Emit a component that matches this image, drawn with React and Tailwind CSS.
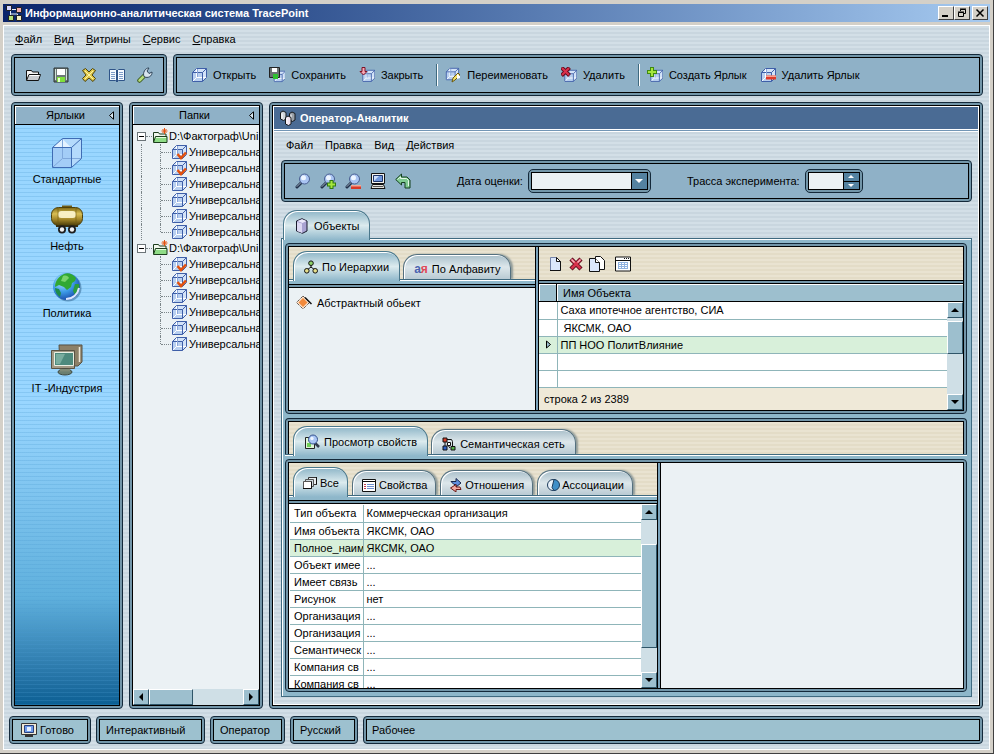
import { useState } from 'react';
import clsx from 'clsx';

/* ---------- icons ---------- */

function Svg({ size = 16, box = 16, children }) {
  return (
    <svg width={size} height={size} viewBox={`0 0 ${box} ${box}`} fill="none" aria-hidden="true" className="shrink-0">
      {children}
    </svg>
  );
}

function CubeShape() {
  return (
    <>
      <path d="M1.5 5.5 5.5 1.5H15.5V10.5L11.5 14.5H1.5Z" fill="#d3e3f8" />
      <path d="M2 6h9v8H2z" fill="#b9d0f0" />
      <path d="M5.5 1.5V10.5H15.5M5.5 10.5 1.5 14.5" stroke="#ffffff" />
      <path d="M1.5 5.5 5.5 1.5H15.5V10.5L11.5 14.5H1.5ZM1.5 5.5H11.5V14.5M11.5 5.5 15.5 1.5" stroke="#3f5fa8" />
      <path d="M6.5 2v8" stroke="#8aa6d8" />
    </>
  );
}

const CubeIcon = () => <Svg><CubeShape /></Svg>;

const CubeCheckIcon = () => (
  <Svg>
    <CubeShape />
    <path d="M6.5 10 10 14 15 8.5" stroke="#e2510f" strokeWidth="2.6" />
  </Svg>
);

const CubeSaveIcon = () => (
  <Svg>
    <g transform="translate(4 3) scale(.8)"><CubeShape /></g>
    <path d="M.5.5h10v10H.5z" fill="#6b7474" stroke="#222" />
    <path d="M3 1h5v4H3z" fill="#fff" />
    <path d="M4 7h5v5H4z" fill="#2fc12f" />
  </Svg>
);

const CubeCloseIcon = () => (
  <Svg>
    <g transform="translate(2.5 2) scale(.86)"><CubeShape /></g>
    <path d="M3 .5h3v4h2L4.5 8 1 4.5h2z" fill="#f7a7b5" stroke="#7d1024" />
  </Svg>
);

const CubeRenameIcon = () => (
  <Svg>
    <g transform="scale(.88)"><CubeShape /></g>
    <path d="M7 15 8 11l5-5 2 2-5 5z" fill="#f3e16a" stroke="#6b5a10" />
    <path d="M12 7l3 2v2l-3 1z" fill="#fff" />
  </Svg>
);

const CubeDeleteIcon = () => (
  <Svg>
    <g transform="translate(2.5 2) scale(.86)"><CubeShape /></g>
    <path d="M.5.5l8 8M8.500.5l-8 8" stroke="#5c0a1c" strokeWidth="4" />
    <path d="M1 1l7 7M8 1 1 8" stroke="#d8304c" strokeWidth="2.2" />
  </Svg>
);

const CubeAddIcon = () => (
  <Svg>
    <g transform="translate(2.5 2) scale(.86)"><CubeShape /></g>
    <path d="M5 0v10M0 5h10" stroke="#3f8a12" strokeWidth="4" />
    <path d="M5 1v8M1 5h8" stroke="#a5e63c" strokeWidth="2" />
  </Svg>
);

const CubeRemoveIcon = () => (
  <Svg>
    <CubeShape />
    <path d="M6 8.5h10v4H6z" fill="#e03a2a" />
    <path d="M6 8.5h10V10H6z" fill="#f7a08f" />
  </Svg>
);

const BigCubeIcon = () => (
  <Svg size={32} box={32}>
    <path d="M1.5 10.5 11.5 1.5H30.5V21.5L20.5 30.5H1.5Z" fill="#b4dafc" />
    <path d="M2 11h18v19H2z" fill="#a3cdf7" />
    <path d="M11.5 2 20 10.500H2z" fill="#e3f2ff" />
    <path d="M11.5 2V21.500H30M11.5 21.5 2 30" stroke="#7fa8dc" />
    <path d="M1.5 10.5 11.5 1.5H30.5V21.5L20.5 30.5H1.5ZM1.5 10.5H20.5V30.5M20.5 10.5 30.5 1.5" stroke="#3f6cb4" />
  </Svg>
);

const OpenFolderIcon = () => (
  <Svg>
    <path d="M1.5 13V3.5h5L7.5 5h6v3" fill="#f4f4f4" stroke="#111" />
    <path d="M1.5 13.5 4 7.5h11.5l-2 6z" fill="#c9ccd0" stroke="#111" />
    <path d="M4.5 8.5h10" stroke="#fff" />
  </Svg>
);

const DiskIcon = () => (
  <Svg>
    <path d="M1 1h14v14H1z" fill="#6e7878" stroke="#2c3434" />
    <path d="M4 2h8v6H4z" fill="#fff" />
    <path d="M2.5 2v11M13.5 2v11" stroke="#cfe3d8" />
    <path d="M4 10h8v5H4z" fill="#7fe03a" />
    <path d="M5 11h2v4H5z" fill="#e6ffd0" />
  </Svg>
);

const CloseIcon = () => (
  <Svg>
    <path d="M1.5 3.5 4.500 1.5l3.500 3.5 3.5-3.5 3 2L11 8l3.5 3.5L12 14.5 8 11l-4 3.5-2.5-3L5 8z" fill="#e0c94c" stroke="#4d430c" />
    <path d="M4 4l8 8M12 4l-8 8" stroke="#fbf3a4" />
  </Svg>
);

const BookIcon = () => (
  <Svg>
    <path d="M.5 2.500h6L8 4l1.500-1.500h6v11h-6L8 15l-1.500-1.500h-6z" fill="#f5f9ff" stroke="#2f5488" />
    <path d="M8 4v10" stroke="#2f5488" strokeWidth="2" />
    <path d="M2 5.5h4M2 7.5h4M2 9.5h4M2 11.5h4M10 5.5h4M10 7.5h4M10 9.5h4M10 11.5h4" stroke="#7d9dc8" />
  </Svg>
);

const WrenchIcon = () => (
  <Svg>
    <path d="M2.500 13.500 8 8" stroke="#3d5a1e" strokeWidth="4.5" strokeLinecap="round" />
    <path d="M2.500 13.500 7 9" stroke="#b5dc7c" strokeWidth="2.5" strokeLinecap="round" />
    <path d="M7 9.500C5.500 6 8 .8 12 1L10 4l2 2.500 3-1.500c.5 4-4 7-8 4.500z" fill="#d8e4ee" stroke="#2e4358" />
  </Svg>
);

function Magnifier() {
  return (
    <>
      <path d="M2 14 6 10" stroke="#20304a" strokeWidth="3" strokeLinecap="round" />
      <path d="M2 13.5 6 9.5" stroke="#9fb0c4" strokeLinecap="round" />
      <circle cx="9.500" cy="6" r="5" fill="#a9c4f2" stroke="#4a5f92" />
      <circle cx="8.500" cy="4.800" r="2.500" fill="#eef5ff" />
    </>
  );
}

const SearchIcon = () => <Svg><Magnifier /></Svg>;

const SearchAddIcon = () => (
  <Svg>
    <Magnifier />
    <path d="M11.5 7v9M7 11.5h9" stroke="#2f7a10" strokeWidth="4" />
    <path d="M11.5 8v7M8 11.5h7" stroke="#a5e63c" strokeWidth="2" />
  </Svg>
);

const SearchRemoveIcon = () => (
  <Svg>
    <Magnifier />
    <path d="M6 12h10v4H6z" fill="#d83a28" />
    <path d="M6 12h10v1.500H6z" fill="#f5a796" />
  </Svg>
);

const ComputerIcon = () => (
  <Svg>
    <path d="M1.5.5h13v10h-13z" fill="#f3f3ee" stroke="#111" />
    <path d="M3.5 2.5h9v6h-9z" fill="#6f97dc" stroke="#1d3468" />
    <path d="M4 3h5L4 8z" fill="#cfe0fb" />
    <path d="M2.5 11.5h11l1.500 4H1z" fill="#e6e6e0" stroke="#111" />
    <path d="M3 13.500h10" stroke="#555" />
  </Svg>
);

const BackIcon = () => (
  <Svg>
    <path d="M.7 6.5 6.500 1v3H12l3 3v8h-5V9.500H6.500V12z" fill="#7fcb92" stroke="#14401f" />
    <path d="M2.500 6.500 5.500 3.800V5.500h6l2 2V13" stroke="#e4f9e6" />
  </Svg>
);

const TankerIcon = () => (
  <Svg size={32} box={32}>
    <defs>
      <linearGradient id="tank" x1="0" y1="0" x2="0" y2="1">
        <stop offset="0" stopColor="#7d6712" />
        <stop offset=".35" stopColor="#d9bf55" />
        <stop offset=".65" stopColor="#a5882a" />
        <stop offset="1" stopColor="#4a3c08" />
      </linearGradient>
    </defs>
    <path d="M11 1.500h10v3H11z" fill="#6e5b13" />
    <rect x=".5" y="3.500" width="31" height="18" rx="7" fill="url(#tank)" stroke="#4e400a" />
    <rect x="7" y="7" width="18" height="7" rx="3.500" fill="#fdf6d0" opacity=".9" />
    <path d="M7 4v17M25 4v17" stroke="#6e5b13" opacity=".6" />
    <path d="M5 21h22v2H5z" fill="#3a3010" />
    {[11, 21].map((x) => (
      <g key={x}>
        <circle cx={x} cy="25.500" r="4" fill="#1d1d1d" />
        <circle cx={x} cy="25.500" r="2.200" fill="#f1f1f1" />
      </g>
    ))}
  </Svg>
);

const GlobeIcon = () => (
  <Svg size={32} box={32}>
    <defs>
      <radialGradient id="globe" cx=".35" cy=".3" r=".8">
        <stop offset="0" stopColor="#b9ecff" />
        <stop offset=".5" stopColor="#3d9be8" />
        <stop offset="1" stopColor="#123a9c" />
      </radialGradient>
    </defs>
    <circle cx="17" cy="17" r="13.500" fill="#2d5f8c" opacity=".5" />
    <circle cx="15.500" cy="15.500" r="13.500" fill="url(#globe)" />
    <path d="M13 3c4-2 9 0 12 4l-1 3-3 2-1 4-4 3-3-3-5-2-4 2c0-6 4-11 9-13z" fill="#31a832" />
    <path d="M12 5c3-1 5 0 6 2l-4 4-4-1z" fill="#79d46a" />
    <path d="M24 13l4 0c1 4-1 9-4 11l-2-4z" fill="#2c9c3f" />
    <path d="M4 17l4 1 2 4-1 4c-3-2-5-5-5-9z" fill="#1d8c4a" />
    <path d="M15 28c7 0 12-5 13-11" stroke="#dbe6ff" strokeWidth="2" />
  </Svg>
);

const MonitorsIcon = () => (
  <Svg size={32} box={32}>
    <path d="M8 1h23v17l-4 4H9z" fill="#8c8068" stroke="#5a5344" />
    <path d="M28.5 3v15" stroke="#efe8d8" strokeWidth="1.5" />
    <path d="M.5 6.500h23v18H.5z" fill="#a39a86" stroke="#5a5344" />
    <path d="M3.5 8.500h19v13h-19z" fill="#4e8a7d" stroke="#e9efe4" />
    <path d="M5 10h9l-5 10H5z" fill="#79ad9f" />
    <ellipse cx="14" cy="28" rx="7" ry="3" fill="#6b7f70" stroke="#3f4a42" />
    <path d="M9 25h10v2.500H9z" fill="#7f8b78" />
  </Svg>
);

const TreeFolderIcon = () => (
  <Svg>
    <path d="M1.5 14V4.5h5L7.500 6H14v3" fill="#f0f6ec" stroke="#1c3d1c" />
    <path d="M1.5 14.500 3.500 8.500H15v6z" fill="#8fdc86" stroke="#1c3d1c" />
    <path d="M4 9.500h10" stroke="#e2fbdc" />
    <path d="M12.5 0v6M9.500 3h6M10.500 1l4 4M14.500 1l-4 4" stroke="#e2510f" />
  </Svg>
);

const NetIcon = () => (
  <Svg>
    <path d="M4.5 4v5h7v4M4.5 9v4M5 4.5h6" stroke="#e9eef7" />
    <path d="M.5.5h5v5h-5z" fill="#d9d9ff" stroke="#222" />
    <path d="M10.5 2.500h5v5h-5z" fill="#f0b0b0" stroke="#222" />
    <path d="M2.500 10.500h5v5h-5z" fill="#b5e07a" stroke="#222" />
    <path d="M10.500 10.500h5v5h-5z" fill="#f3edc3" stroke="#222" />
  </Svg>
);

const AnalystIcon = () => (
  <Svg>
    {[[0, 1, '#cfd3d8'], [9, 2, '#9aa0a8'], [5, 6, '#f0e3ee']].map(([x, y, fill]) => (
      <g key={x}>
        <path d={`M${x + 0.5} ${y + 1.5}l2.5-1.5 3 1.5v6.5l-2.5 1.5-3-1.5z`} fill={fill} stroke="#15181c" />
        <path d={`M${x + 2} ${y + 2.5}v5`} stroke="#fff" />
      </g>
    ))}
  </Svg>
);

const PrismIcon = () => (
  <Svg>
    <path d="M2.500 3 8 .7l5 2.300v10l-4.500 2.300L2.500 13z" fill="#a9a3d2" stroke="#191a2c" />
    <path d="M3.500 3l5 2L12.500 3 8 1.300z" fill="#eceafb" />
    <path d="M3 4l5 1.500V15l-5-2z" fill="#dcd8f2" />
  </Svg>
);

const HierarchyIcon = () => (
  <Svg size={14} box={14}>
    <path d="M7 5v3M7 7 3 10M7 7l4 3" stroke="#111" />
    <circle cx="7" cy="3.200" r="2.300" fill="#8fd36a" stroke="#111" />
    <circle cx="2.800" cy="10.800" r="2.300" fill="#e6df8a" stroke="#111" />
    <circle cx="11.200" cy="10.800" r="2.300" fill="#e6df8a" stroke="#111" />
  </Svg>
);

const DiamondIcon = () => (
  <Svg>
    <path d="M7 1 13.500 7.500 7 14 .5 7.500z" fill="#fbe3cc" stroke="#2a1a10" strokeDasharray="1 1" />
    <path d="M7 3 11.500 7.500 7 12 2.500 7.500z" fill="#f28a3c" />
    <path d="M9 2.500 15.500 9" stroke="#111" strokeWidth="1.500" />
  </Svg>
);

const PageIcon = () => (
  <Svg>
    <path d="M3.500 1.500h6l4 4v9h-10z" fill="#dbe7fb" stroke="#7483a8" />
    <path d="M9.500 1.500v4h4" fill="#fff" stroke="#111" />
    <path d="M3 14.500h10.500v-9l-4-4" stroke="#111" />
  </Svg>
);

const RedCrossIcon = () => (
  <Svg>
    <path d="M3 3l10 10M13 3 3 13" stroke="#5c0a1c" strokeWidth="4.500" />
    <path d="M3.500 3.500l9 9M12.500 3.500l-9 9" stroke="#d8304c" strokeWidth="2.500" />
    <path d="M3.500 3.500l3 3M12.500 3.500l-3 3" stroke="#f5b3bd" strokeWidth="1.500" />
  </Svg>
);

const PagesIcon = () => (
  <Svg>
    <path d="M6.500.5h5l4 4v9h-9z" fill="#fff" stroke="#111" />
    <path d="M.5 2.500h6l4 4v9H.5z" fill="#dbe7fb" stroke="#111" />
    <path d="M6.500 2.500v4h4" fill="#fff" stroke="#111" />
  </Svg>
);

const CalendarIcon = () => (
  <Svg>
    <path d="M.5 1h15v14H.5z" fill="#fff" stroke="#111" />
    <path d="M1 4.500h14" stroke="#111" />
    <path d="M9 2.500h1M11 2.500h1M13 2.500h1" stroke="#111" />
    <path d="M3 6.500h10M3 8.500h10M3 10.500h10M3 12.500h10M3.500 6v7M6.500 6v7M9.500 6v7M12.500 6v7" stroke="#8fb2e0" />
  </Svg>
);

const PreviewIcon = () => (
  <Svg>
    <path d="M1.500 3.500h9v11h-9z" fill="#dff5d8" stroke="#222" />
    <path d="M3 9h4v4H3z" fill="#6fcf57" />
    <path d="M11 9l4 4" stroke="#333d4f" strokeWidth="2.500" />
    <circle cx="9" cy="5.500" r="4.500" fill="#a9c6f5" stroke="#33508c" />
    <circle cx="8" cy="4.500" r="1.700" fill="#eef5ff" />
  </Svg>
);

const SemanticIcon = () => (
  <Svg size={14} box={14}>
    <path d="M3 5v5M5 2.500h4.500l1 2V10M5 7l3 4" stroke="#111" />
    <path d="M1 1h4v4H1z" fill="#d8402c" stroke="#111" />
    <path d="M1 9h4v4H1z" fill="#2f62c8" stroke="#111" />
    <path d="M5.500 5.500h3v3h-3z" fill="#fff" stroke="#111" />
    <path d="M9 9.500h4V13H9z" fill="#58b04c" stroke="#111" />
  </Svg>
);

const StackIcon = () => (
  <Svg>
    <path d="M6.500 2.500h8v7h-8z" fill="#e9eef0" stroke="#333" />
    <path d="M3.500 4.500h8v7h-8z" fill="#cdd7dc" stroke="#555" />
    <path d="M1.500 6.500h8v7h-8z" fill="#fff" stroke="#555" />
    <path d="M1 13.500h8.500V6.500M14.500 2v7.500" stroke="#111" />
  </Svg>
);

const PropsIcon = () => (
  <Svg>
    <path d="M1.500 2.500h13v12h-13z" fill="#fff" stroke="#111" />
    <path d="M2 4.500h12" stroke="#111" />
    <path d="M3 7.500h2M3 9.500h2M3 11.500h2" stroke="#c23b4b" />
    <path d="M6 7.500h7M6 9.500h7M6 11.500h7" stroke="#6d8fd0" />
  </Svg>
);

const RelationsIcon = () => (
  <Svg size={14} box={14}>
    <path d="M2 3.500h5V.5L12 5 7 9V6.500H5z" fill="#5f8fe0" stroke="#15254a" />
    <path d="M12 11.500H7V14L1.500 10 7 6.500V9h4z" fill="#f3aaa2" stroke="#6b1a18" />
  </Svg>
);

const AssocIcon = () => (
  <Svg size={14} box={14}>
    <circle cx="7" cy="7" r="5.500" fill="#e9f2fa" stroke="#1d3c5c" />
    <path d="M8 1.500a5.500 5.500 0 0 1 0 11l-2-3z" fill="#3f8fc8" stroke="#1d3c5c" />
  </Svg>
);

const ReadyIcon = () => (
  <Svg>
    <path d="M.5 1.500h15v11H.5z" fill="#f0ead8" stroke="#333" />
    <path d="M3.500 3.500h9v7h-9z" fill="#6f9bea" stroke="#29407a" />
    <path d="M6 5h4v4H6z" fill="#e6f0ff" />
    <path d="M4 14h8" stroke="#333" strokeWidth="2" />
  </Svg>
);

/* ---------- building blocks ---------- */

const STRIPES = 'bg-[repeating-linear-gradient(to_bottom,#d3dfe7_0px,#d3dfe7_2px,#c9d6df_2px,#c9d6df_4px)]';
const SAND = 'bg-[repeating-linear-gradient(to_bottom,#e9e3d1_0px,#e9e3d1_2px,#e3dcc7_2px,#e3dcc7_4px)]';

function Frame({ className, innerClassName, children }) {
  return (
    <div className={clsx('flex rounded-[4px] border border-[#14293a] bg-[#7396a9] p-[2px]', className)}>
      <div className={clsx('min-w-0 flex-1 border border-black', innerClassName)}>{children}</div>
    </div>
  );
}

function Arrow({ dir, className = 'fill-black' }) {
  const shapes = { up: 'M0 6 4 2 8 6z', down: 'M0 2 4 6 8 2z', left: 'M6 0 2 4 6 8z', right: 'M2 0 6 4 2 8z' };
  return (
    <svg width="8" height="8" viewBox="0 0 8 8" aria-hidden="true" className={className}>
      <path d={shapes[dir]} />
    </svg>
  );
}

function ScrollButton({ dir, label }) {
  return (
    <button
      type="button"
      aria-label={label}
      className="flex h-4 w-4 shrink-0 items-center justify-center border border-t-white border-r-[#2f5568] border-b-[#2f5568] border-l-white bg-[#9dbfce]"
    >
      <Arrow dir={dir} />
    </button>
  );
}

function Thumb({ className }) {
  return <div className={clsx('shrink-0 border border-t-white border-r-[#2f5568] border-b-[#2f5568] border-l-white bg-[#9dbfce]', className)} />;
}

function Tab({ icon, label, active, compact, onClick }) {
  return (
    <button
      type="button"
      role="tab"
      aria-selected={active}
      onClick={onClick}
      className={clsx(
        'flex items-center rounded-t-[14px] border border-b-0 whitespace-nowrap',
        compact ? 'gap-[2px] px-2' : 'gap-1 px-2.5',
        active
          ? 'relative z-10 -mb-[2px] h-[30px] border-[#4a788c] bg-linear-to-b from-[#8fb6c8] via-[#dcebee] to-[#8eb7ca] shadow-[inset_1px_1px_0_#ffffff]'
          : 'h-[25px] border-[#54707f] bg-linear-to-b from-[#a9bfca] via-[#dde7eb] to-[#b9cad3] pt-[3px] shadow-[inset_1px_1px_0_#ffffff,2px_0_2px_#8f9a98]'
      )}
    >
      {icon}
      {label}
    </button>
  );
}

function TabStrip({ tabs, label, compact }) {
  const [current, setCurrent] = useState(0);
  return (
    <div role="tablist" aria-label={label} className={clsx('flex h-8 items-end pl-1', compact ? 'gap-1' : 'gap-[3px]')}>
      {tabs.map((tab, i) => (
        <Tab key={tab.label} {...tab} compact={compact} active={i === current} onClick={() => setCurrent(i)} />
      ))}
    </div>
  );
}

const PageEdge = () => <div className="h-[5px] shrink-0 border-t border-[#3f6a80] bg-[#8eb7ca] shadow-[inset_0_1px_0_#ffffff]" />;
const DoubleRule = () => <div className="h-1 shrink-0 border-y border-black bg-[#7396a9]" />;
const Splitter = () => <div className="w-1 shrink-0 border-x border-black bg-[#7ba3bb]" />;

function IconButton({ label, children }) {
  return (
    <button type="button" aria-label={label} className="flex h-5 w-5 items-center justify-center">
      {children}
    </button>
  );
}

function MenuBar({ items, underline, className }) {
  return (
    <nav className={clsx('flex h-7 shrink-0 items-center gap-3 pb-[2px]', className)}>
      {items.map((item) => (
        <button key={item} type="button">
          {underline ? (
            <>
              <span className="underline underline-offset-1">{item[0]}</span>
              {item.slice(1)}
            </>
          ) : (
            item
          )}
        </button>
      ))}
    </nav>
  );
}

function PanelHeader({ title }) {
  return (
    <div className="flex h-[19px] shrink-0 items-center border-b border-black bg-[#8fb1c7] pr-1 shadow-[inset_1px_1px_0_#ffffff]">
      <h2 className="flex-1 pl-2 text-center">{title}</h2>
      <button type="button" aria-label="Свернуть">
        <svg width="7" height="9" viewBox="0 0 7 9" fill="none" aria-hidden="true">
          <path d="M5.500.8v7.400L1.500 4.500z" fill="#d7e8f2" stroke="#000" />
        </svg>
      </button>
    </div>
  );
}

/* ---------- window parts ---------- */

function TitleBar() {
  const btn = 'flex h-[14px] w-4 items-center justify-center border border-t-white border-r-[#404040] border-b-[#404040] border-l-white bg-[#d4d0c8]';
  return (
    <header className="flex h-[18px] shrink-0 items-center bg-linear-to-r from-[#0a246a] to-[#a6caf0] pr-[2px] pl-[3px] text-white">
      <NetIcon />
      <h1 className="flex-1 pl-[3px] font-bold">Информационно-аналитическая система TracePoint</h1>
      <button type="button" aria-label="Свернуть" className={btn}>
        <svg width="10" height="10" viewBox="0 0 10 10"><path d="M1 7h6v2H1z" /></svg>
      </button>
      <button type="button" aria-label="Восстановить" className={btn}>
        <svg width="10" height="10" viewBox="0 0 10 10" fill="none" stroke="#000">
          <path d="M3.5 3V1.5h5v4H7M3 1h6" />
          <path d="M1.5 4.5h5v4h-5zM1 4h6" />
        </svg>
      </button>
      <button type="button" aria-label="Закрыть" className={clsx(btn, 'ml-[2px]')}>
        <svg width="10" height="10" viewBox="0 0 10 10" stroke="#000" strokeWidth="1.500"><path d="M1.5 1.5l7 7M8.5 1.5l-7 7" /></svg>
      </button>
    </header>
  );
}

const ACTIONS = [
  { icon: <CubeIcon />, label: 'Открыть' },
  { icon: <CubeSaveIcon />, label: 'Сохранить' },
  { icon: <CubeCloseIcon />, label: 'Закрыть' },
  null,
  { icon: <CubeRenameIcon />, label: 'Переименовать' },
  { icon: <CubeDeleteIcon />, label: 'Удалить' },
  null,
  { icon: <CubeAddIcon />, label: 'Создать Ярлык' },
  { icon: <CubeRemoveIcon />, label: 'Удалить Ярлык' },
];

function Toolbars() {
  return (
    <div className="flex gap-1.5">
      <Frame className="h-[42px] w-[156px]" innerClassName="flex items-center justify-between bg-[#8fb1c7] px-2">
        <IconButton label="Открыть файл"><OpenFolderIcon /></IconButton>
        <IconButton label="Сохранить файл"><DiskIcon /></IconButton>
        <IconButton label="Закрыть файл"><CloseIcon /></IconButton>
        <IconButton label="Справочник"><BookIcon /></IconButton>
        <IconButton label="Настройки"><WrenchIcon /></IconButton>
      </Frame>
      <Frame className="h-[42px] min-w-0 flex-1" innerClassName="flex items-center gap-[13px] bg-[#8fb1c7] pl-[14px]">
        {ACTIONS.map((action, i) =>
          action ? (
            <button key={action.label} type="button" className="flex items-center gap-1.5 whitespace-nowrap">
              {action.icon}
              {action.label}
            </button>
          ) : (
            <div key={i} className="-mr-1.5 h-[22px] w-[2px] border-l border-[#3f6a80] bg-white" />
          )
        )}
      </Frame>
    </div>
  );
}

function Shortcuts() {
  const items = [
    { icon: <BigCubeIcon />, label: 'Стандартные' },
    { icon: <TankerIcon />, label: 'Нефть' },
    { icon: <GlobeIcon />, label: 'Политика' },
    { icon: <MonitorsIcon />, label: 'IT -Индустрия' },
  ];
  return (
    <Frame className="w-[112px] shrink-0" innerClassName="flex flex-col bg-linear-to-b from-[#99d6ff] from-50% via-[#5fb0dd] via-82% to-[#0a5f93]">
      <PanelHeader title="Ярлыки" />
      <div className="flex flex-1 flex-col items-center gap-[17px] bg-[repeating-linear-gradient(to_bottom,transparent_0px,transparent_3px,#4a9ad040_3px,#4a9ad040_4px)] pt-3">
        {items.map(({ icon, label }) => (
          <button key={label} type="button" className="flex flex-col items-center gap-[2px] last:mt-1.5 last:gap-1">
            {icon}
            <span className="leading-4">{label}</span>
          </button>
        ))}
      </div>
    </Frame>
  );
}

function TreeGroup({ first }) {
  return (
    <li>
      <div className="flex h-4 items-center">
        <button
          type="button"
          aria-label="Свернуть ветку"
          className="ml-1 flex h-[9px] w-[9px] shrink-0 items-center justify-center border border-[#6b7478] bg-white"
        >
          <span className="h-px w-[5px] bg-black" />
        </button>
        <span className="w-1.5 shrink-0 border-b border-dotted border-[#7b8589]" />
        <TreeFolderIcon />
        <span className="pl-px">D:\Фактограф\Uni</span>
      </div>
      <ul>
        {[true, true, false, false, false, false].map((checked, i) => (
          <li key={i} className="flex h-4 items-center">
            <span className={clsx('h-4 w-[9px] shrink-0 border-r border-dotted', first ? 'border-[#7b8589]' : 'border-transparent')} />
            <span className={clsx('w-[19px] shrink-0 self-start border-r border-dotted border-[#7b8589]', i === 5 ? 'h-2' : 'h-4')} />
            <span className="w-[10px] shrink-0 border-b border-dotted border-[#7b8589]" />
            {checked ? <CubeCheckIcon /> : <CubeIcon />}
            <span className="pl-[2px]">Универсальна</span>
          </li>
        ))}
      </ul>
    </li>
  );
}

function Folders() {
  return (
    <Frame className="w-[134px] shrink-0" innerClassName="flex flex-col bg-[#ebf1f4]">
      <PanelHeader title="Папки" />
      <ul className="flex-1 overflow-hidden pt-[3px] whitespace-nowrap">
        <TreeGroup first />
        <TreeGroup />
      </ul>
      <div className="flex bg-[#cfdfe6]">
        <ScrollButton dir="left" label="Прокрутить влево" />
        <Thumb className="h-4 w-11" />
        <div className="flex-1" />
        <ScrollButton dir="right" label="Прокрутить вправо" />
      </div>
    </Frame>
  );
}

function SearchBar() {
  const field = 'flex rounded-[5px] border border-[#14293a] bg-[#7396a9] p-[2px]';
  return (
    <Frame className="h-[42px] shrink-0" innerClassName="flex items-center bg-[#8fb1c7] pl-2">
      <div className="flex gap-[5px]">
        <IconButton label="Найти"><SearchIcon /></IconButton>
        <IconButton label="Добавить к поиску"><SearchAddIcon /></IconButton>
        <IconButton label="Убрать из поиска"><SearchRemoveIcon /></IconButton>
        <IconButton label="Компьютер"><ComputerIcon /></IconButton>
        <IconButton label="Назад"><BackIcon /></IconButton>
      </div>
      <label htmlFor="date" className="pr-[5px] pl-11">Дата оценки:</label>
      <div className={field}>
        <div className="relative">
          <select id="date" className="block h-[18px] w-[117px] appearance-none border border-black bg-[#ebf1f4]" />
          <span className="pointer-events-none absolute inset-y-px right-px flex w-4 items-center justify-center border-l border-black bg-[#5482a0]">
            <Arrow dir="down" className="fill-white" />
          </span>
        </div>
      </div>
      <label htmlFor="track" className="pr-[5px] pl-9">Трасса эксперимента:</label>
      <div className={field}>
        <div className="flex h-[18px] border border-black">
          <input id="track" type="text" className="w-[34px] bg-[#ebf1f4]" />
          <div className="flex w-4 flex-col gap-px border-l border-black bg-black">
            <button type="button" aria-label="Больше" className="flex flex-1 items-center justify-center bg-[#5482a0]">
              <svg width="6" height="3" viewBox="0 0 6 3"><path d="M0 3 3 0l3 3z" fill="#fff" /></svg>
            </button>
            <button type="button" aria-label="Меньше" className="flex flex-1 items-center justify-center bg-[#5482a0]">
              <svg width="6" height="3" viewBox="0 0 6 3"><path d="M0 0l3 3 3-3z" fill="#fff" /></svg>
            </button>
          </div>
        </div>
      </div>
    </Frame>
  );
}

function ObjectList() {
  const rows = ['Саха ипотечное агентство, СИА', '\u00a0ЯКСМК, ОАО', 'ПП НОО ПолитВлияние', '', ''];
  return (
    <div className="flex min-w-0 flex-1 flex-col">
      <div className={clsx('flex h-[33px] shrink-0 items-center gap-px pl-1.5', SAND)}>
        <IconButton label="Создать"><PageIcon /></IconButton>
        <IconButton label="Удалить"><RedCrossIcon /></IconButton>
        <IconButton label="Копировать"><PagesIcon /></IconButton>
        <span className="w-1" />
        <IconButton label="Таблица"><CalendarIcon /></IconButton>
      </div>
      <DoubleRule />
      <div className="flex min-h-0 flex-1 flex-col">
        <div className="flex h-[18px] shrink-0 border-b border-black bg-[#9dbfce]">
          <div className="w-[18px] border-r border-black shadow-[inset_1px_1px_0_#ffffff]" />
          <div id="object-name" className="flex flex-1 items-center pl-1.5 shadow-[inset_1px_1px_0_#ffffff]">Имя Объекта</div>
        </div>
        <div className="flex min-h-0 flex-1">
          <div className="flex min-w-0 flex-1 flex-col bg-[#efe9d8]">
            <table aria-labelledby="object-name" className="w-full table-fixed bg-white">
              <tbody>
                {rows.map((name, i) => (
                  <tr key={i} className={clsx('h-[17px] border-b border-[#8fb5b9] leading-4', i === 2 && 'bg-[#d8f0da]')}>
                    <td className="w-[18px] border-r border-[#8fb5b9] p-0 pl-1.5">
                      {i === 2 && (
                        <svg width="7" height="9" viewBox="0 0 7 9" aria-hidden="true">
                          <path d="M1.5 1v7l4-3.500z" fill="#9dbfce" stroke="#000" />
                        </svg>
                      )}
                    </td>
                    <td className="truncate p-0 pl-[3px]">{name}</td>
                  </tr>
                ))}
              </tbody>
            </table>
            <div className="flex flex-1 items-center pl-[5px]">строка 2 из 2389</div>
          </div>
          <div className="flex w-4 flex-col bg-[#cfdfe6]">
            <ScrollButton dir="up" label="Прокрутить вверх" />
            <Thumb className="mt-[3px] h-[33px] w-4" />
            <div className="flex-1" />
            <ScrollButton dir="down" label="Прокрутить вниз" />
          </div>
        </div>
      </div>
    </div>
  );
}

const PROPERTIES = [
  ['Тип объекта', 'Коммерческая организация'],
  ['Имя объекта', 'ЯКСМК, ОАО'],
  ['Полное_наим', 'ЯКСМК, ОАО'],
  ['Объект имее', '...'],
  ['Имеет связь', '...'],
  ['Рисунок', 'нет'],
  ['Организация', '...'],
  ['Организация', '...'],
  ['Семантическ', '...'],
  ['Компания св', '...'],
  ['Компания св', '...'],
];

function PropertyTable() {
  return (
    <div className="flex min-h-0 flex-1 bg-white">
      <div className="min-w-0 flex-1 overflow-hidden pt-px pl-px">
        <table className="w-full table-fixed">
          <tbody>
            {PROPERTIES.map(([name, value], i) => (
              <tr key={i} className={clsx('h-[17px] border-b border-[#8fb5b9] leading-4', i === 2 && 'bg-[#d8f0da]')}>
                <th scope="row" className="w-[73px] overflow-hidden border-r border-[#8fb5b9] p-0 pl-1 text-left font-normal whitespace-nowrap">
                  {name}
                </th>
                <td className="truncate p-0 pl-[3px]">{value}</td>
              </tr>
            ))}
          </tbody>
        </table>
      </div>
      <div className="flex w-4 flex-col bg-[#cfdfe6]">
        <ScrollButton dir="up" label="Прокрутить вверх" />
        <div className="flex-1" />
        <Thumb className="h-[57%] w-4" />
        <div className="flex-1" />
        <ScrollButton dir="down" label="Прокрутить вниз" />
      </div>
    </div>
  );
}

function ObjectsPage() {
  return (
    <div className="flex min-h-0 flex-1 flex-col border border-[#3f6a80] bg-[#8eb7ca] p-1 pl-[3px] shadow-[inset_1px_1px_0_#ffffff]">
      <Frame className="h-[171px] shrink-0" innerClassName="flex">
        <div className="flex w-[246px] flex-col">
          <div className={SAND}>
            <TabStrip
              label="Порядок объектов"
              tabs={[
                { icon: <HierarchyIcon />, label: 'По Иерархии' },
                {
                  icon: (
                    <span aria-hidden="true" className="text-xs font-bold">
                      <span className="text-[#4a62b0]">а</span>
                      <span className="text-[#e04858]">я</span>
                    </span>
                  ),
                  label: 'По Алфавиту',
                },
              ]}
            />
          </div>
          <PageEdge />
          <DoubleRule />
          <div className="flex-1 bg-[#ebf1f4] pt-[7px] pl-[7px]">
            <div className="flex items-center gap-[5px]">
              <DiamondIcon />
              Абстрактный обьект
            </div>
          </div>
        </div>
        <Splitter />
        <ObjectList />
      </Frame>

      <div className="mt-1 flex shrink-0 rounded-t-[4px] border border-b-0 border-[#14293a] bg-[#7396a9] p-[2px] pb-0">
        <div className={clsx('flex-1 border border-b-0 border-black', SAND)}>
          <TabStrip
            label="Просмотр"
            tabs={[
              { icon: <PreviewIcon />, label: 'Просмотр свойств' },
              { icon: <SemanticIcon />, label: 'Семантическая сеть' },
            ]}
          />
        </div>
      </div>
      <PageEdge />

      <Frame className="min-h-0 flex-1" innerClassName="flex">
        <div className="flex min-h-0 w-[368px] flex-col">
          <div className={SAND}>
            <TabStrip
              compact
              label="Свойства объекта"
              tabs={[
                { icon: <StackIcon />, label: 'Все' },
                { icon: <PropsIcon />, label: 'Свойства' },
                { icon: <RelationsIcon />, label: 'Отношения' },
                { icon: <AssocIcon />, label: 'Ассоциации' },
              ]}
            />
          </div>
          <PageEdge />
          <DoubleRule />
          <PropertyTable />
        </div>
        <Splitter />
        <div className="flex-1 bg-[#ebf1f4]" />
      </Frame>
    </div>
  );
}

function Analyst() {
  return (
    <Frame className="min-w-0 flex-1" innerClassName={clsx('flex flex-col', STRIPES)}>
      <div className="flex min-h-0 flex-1 flex-col border border-white">
        <div className="flex h-[23px] shrink-0 items-center gap-1 border-b border-white bg-[#4a6b94] pl-1.5 text-white">
          <AnalystIcon />
          <h2 className="font-bold">Оператор-Аналитик</h2>
        </div>
        <div className="h-[2px] shrink-0 border-b border-white bg-[#7396b5]" />
        <MenuBar items={['Файл', 'Правка', 'Вид', 'Действия']} className="pl-3" />
        <div className="flex min-h-0 flex-1 flex-col pr-1.5 pb-[7px] pl-[7px]">
          <SearchBar />
          <div role="tablist" aria-label="Разделы" className="flex h-9 shrink-0 items-end pl-[2px]">
            <Tab icon={<PrismIcon />} label="Объекты" active />
          </div>
          <ObjectsPage />
        </div>
      </div>
    </Frame>
  );
}

function StatusBar() {
  const inner = 'flex items-center gap-[3px] bg-[#9dc1cf] whitespace-nowrap';
  return (
    <footer className="-ml-[2px] flex h-7 shrink-0 gap-[5px]">
      <Frame className="w-[82px]" innerClassName={clsx(inner, 'pl-2')}>
        <ReadyIcon />
        Готово
      </Frame>
      <Frame className="w-[109px]" innerClassName={clsx(inner, 'pl-1.5')}>Интерактивный</Frame>
      <Frame className="w-[75px]" innerClassName={clsx(inner, 'pl-1.5')}>Оператор</Frame>
      <Frame className="w-[68px]" innerClassName={clsx(inner, 'pl-1.5')}>Русский</Frame>
      <Frame className="flex-1" innerClassName={clsx(inner, 'pl-[5px]')}>Рабочее</Frame>
    </footer>
  );
}

export default function App() {
  return (
    <div className="flex h-screen min-h-[600px] flex-col border-r border-b border-[#404040] bg-[#d4d0c8] p-[3px] pt-1 font-['Liberation_Sans',Arial,sans-serif] text-[11px] leading-[14px] text-black">
      <TitleBar />
      <div className={clsx('mt-[3px] flex min-h-0 flex-1 flex-col border border-white pr-1.5 pb-[5px] pl-[7px]', STRIPES)}>
        <MenuBar underline items={['Файл', 'Вид', 'Витрины', 'Сервис', 'Справка']} className="pl-1" />
        <Toolbars />
        <div className="flex min-h-0 flex-1 gap-1.5 pt-1.5 pb-[7px]">
          <Shortcuts />
          <Folders />
          <Analyst />
        </div>
        <StatusBar />
      </div>
    </div>
  );
}
